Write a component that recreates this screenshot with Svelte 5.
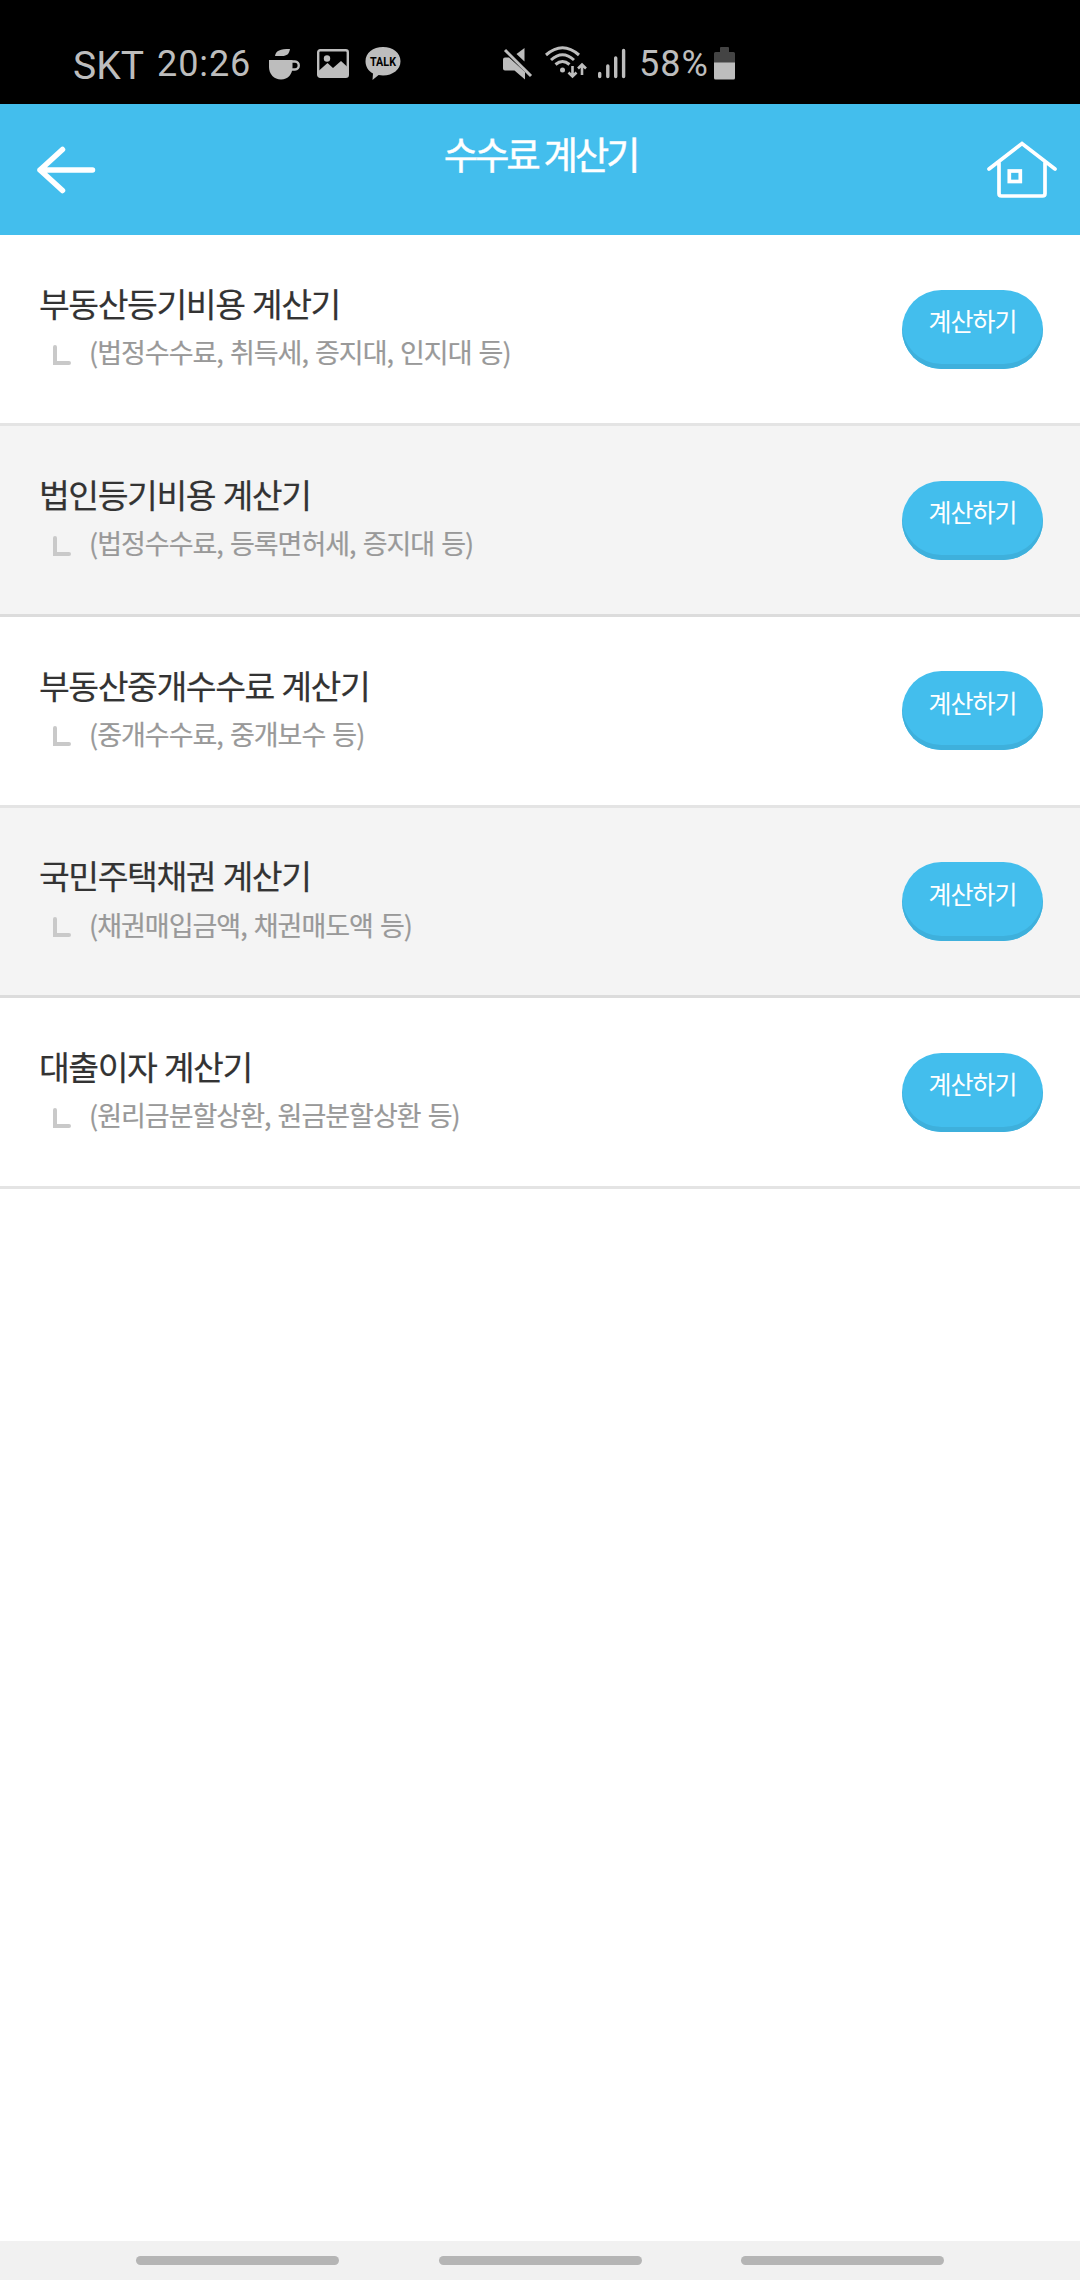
<script>
  const items = [
    { title: '부동산등기비용 계산기', detail: '(법정수수료, 취득세, 증지대, 인지대 등)' },
    { title: '법인등기비용 계산기', detail: '(법정수수료, 등록면허세, 증지대 등)' },
    { title: '부동산중개수수료 계산기', detail: '(중개수수료, 중개보수 등)' },
    { title: '국민주택채권 계산기', detail: '(채권매입금액, 채권매도액 등)' },
    { title: '대출이자 계산기', detail: '(원리금분할상환, 원금분할상환 등)' }
  ];
</script>

<div class="screen">
  <div class="status">
    <span class="carrier">SKT</span>
    <span class="clock">20:26</span>
    <svg class="cup" width="31" height="31" viewBox="0 0 31 31">
      <path d="M6 7C7 1.500 11 0 21 0C20 5 18 7 13 7Z" />
      <path d="M0 11H23.500V18C23.500 25 19 30.500 12 30.500C5 30.500 0 25 0 18Z" />
      <path class="line" d="M23 12.500H26C31 12.500 31 20.500 26 20.500H23" />
    </svg>
    <svg class="photo" width="32" height="29" viewBox="0 0 32 29">
      <rect class="line" x="1.200" y="1.200" width="29.600" height="26.600" rx="2" />
      <circle cx="10" cy="9.500" r="3.200" />
      <path d="M1.500 22L10.500 14L16 19L24 12L30.500 18V28H1.500Z" />
    </svg>
    <svg class="talk" width="36" height="34" viewBox="0 0 36 34">
      <path d="M18 0C28 0 35.500 6 35.500 14.200S28 28.400 18 28.400C16.500 28.400 15 28.300 13.600 28L7.500 33L8 26.500C3.300 24 .5 19.500 .5 14.200C.5 6 8 0 18 0Z" />
      <text x="18" y="19" text-anchor="middle" textLength="26" lengthAdjust="spacingAndGlyphs">TALK</text>
    </svg>
    <svg class="mute" width="30" height="32" viewBox="0 0 30 32">
      <path d="M21.500 0V13.500L13.500 6Z" />
      <path d="M2 9.500H6L22 24V31.500L11.500 22.500H2Q0 22.500 0 20.500V11.500Q0 9.500 2 9.500Z" />
      <path class="slash" d="M2 2L28 28" />
    </svg>
    <svg class="wifi" width="42" height="33" viewBox="0 0 42 33">
      <path class="arc" d="M1 9Q17.500 -5.500 34 9M6 14Q17.500 3.500 29 14M10.500 18.500Q17.500 12.500 24.500 18.500" />
      <circle cx="17.500" cy="24" r="2.500" />
      <path class="updown" d="M27.500 20V30M23.500 26.500L27.500 30.500L31.500 26.500M37 29V18.500M33 22.500L37 18.500L41 22.500" />
    </svg>
    <svg class="signal" width="28" height="31" viewBox="0 0 28 31">
      <path d="M1.700 25.500V28.500M9.800 18V28.500M17.700 10V28.500M25.600 2.500V28.500" />
    </svg>
    <span class="percent">58%</span>
    <svg class="battery" width="21" height="33" viewBox="0 0 21 33">
      <path class="empty" d="M6 1Q6 0 7 0H14Q15 0 15 1V5H19.500Q21 5 21 6.500V16H0V6.500Q0 5 1.500 5H6Z" />
      <path d="M0 15.500H21V31Q21 32.500 19.500 32.500H1.500Q0 32.500 0 31Z" />
    </svg>
  </div>

  <header>
    <svg class="back" width="60" height="48" viewBox="0 0 60 48">
      <path d="M26.500 3.500L4 24L26.500 44.500M4 24H56.500" />
    </svg>
    <h1>수수료 계산기</h1>
    <svg class="home" width="70" height="58" viewBox="0 0 70 58">
      <path d="M2 28L35 2.500L68 28M12 21.500V52.500Q12 55 14.500 55H55.500Q58 55 58 52.500V21.500" />
      <rect x="22.300" y="30" width="11" height="10.500" />
    </svg>
  </header>

  <ul>
    {#each items as item}
      <li>
        <div class="info">
          <h2>{item.title}</h2>
          <p>
            <svg width="18" height="20" viewBox="0 0 18 20"><path d="M2 2V18H16" /></svg>
            <span>{item.detail}</span>
          </p>
        </div>
        <button>계산하기</button>
      </li>
    {/each}
  </ul>

  <nav><i></i><i></i><i></i></nav>
</div>

<style>
  :global(body) { background: #fff; }
  .screen {
    width: 1080px;
    height: 2280px;
    display: flex;
    flex-direction: column;
    background: #fff;
    font-family: "Noto Sans CJK KR", sans-serif;
    overflow: hidden;
  }
  .status {
    box-sizing: border-box;
    height: 104px;
    flex: none;
    display: flex;
    align-items: flex-start;
    padding-left: 73px;
    background: #000;
    color: #bdbdbd;
    font-family: Roboto, sans-serif;
    white-space: nowrap;
  }
  .status span { flex: none; font-size: 36px; line-height: 42px; margin-top: 43px; }
  .status .carrier { width: 84px; font-size: 39px; line-height: 46px; }
  .status .clock { width: 112px; letter-spacing: .9px; }
  .status .percent { width: 74px; margin-left: 13px; letter-spacing: 1px; }
  .status svg { flex: none; fill: #bdbdbd; }
  .cup { margin-top: 49px; }
  .status .line { fill: none; stroke: #bdbdbd; stroke-width: 2.400; }
  .photo { margin: 49px 0 0 17px; }
  .talk { margin: 47px 0 0 16px; }
  .talk text { fill: #000; font: 700 12.500px Roboto, sans-serif; }
  .mute { margin: 48px 0 0 102px; }
  .slash { stroke: #bdbdbd; stroke-width: 3; }
  .wifi { margin: 46px 0 0 12px; }
  .arc { fill: none; stroke: #bdbdbd; stroke-width: 3; }
  .updown { fill: none; stroke: #bdbdbd; stroke-width: 2.600; }
  .signal { margin: 48px 0 0 11px; }
  .signal path { stroke: #bdbdbd; stroke-width: 3.400; stroke-linecap: round; }
  .battery { margin: 47px 0 0 1px; }
  .battery .empty { fill: #444; }

  header {
    box-sizing: border-box;
    height: 131.200px;
    flex: none;
    display: grid;
    grid-template-columns: 100px 1fr 100px;
    align-items: start;
    background: #43beed;
  }
  header svg { fill: none; stroke: #fff; }
  .back { margin: 42px 0 0 36px; stroke-width: 5.500; stroke-linecap: round; stroke-linejoin: round; }
  .home { margin: 37px 0 0 7px; stroke-width: 3.700; stroke-linecap: round; }
  h1 {
    margin: 21px 0 0 1px;
    color: #fff;
    text-align: center;
    font-size: 37.500px;
    font-weight: 400;
    line-height: 56px;
    letter-spacing: -3.300px;
    word-spacing: 1px;
    -webkit-text-stroke: .4px #fff;
  }

  ul { flex: 1; margin: 0; padding: 0; list-style: none; }
  li {
    box-sizing: border-box;
    height: 190.800px;
    display: flex;
    justify-content: space-between;
    padding: 0 37px 0 39px;
    border-bottom: 3px solid #e4e4e4;
  }
  li:nth-child(even) { background: #f4f4f4; border-bottom-color: #dcdcdc; }
  h2 {
    margin: 42.800px 0 0;
    color: #333;
    font-size: 33.500px;
    font-weight: 400;
    line-height: 50px;
    letter-spacing: -1.450px;
    word-spacing: 1.200px;
    -webkit-text-stroke: .2px #333;
  }
  p {
    display: flex;
    align-items: flex-start;
    margin: 1.300px 0 0;
    color: #999;
    font-size: 27px;
    line-height: 46px;
    letter-spacing: -1px;
    word-spacing: 2px;
    -webkit-text-stroke: .2px #999;
  }
  p svg { margin: 15.600px 18px 0 14px; fill: none; stroke: #c9c9c9; stroke-width: 4; stroke-linecap: round; }
  button {
    width: 141px;
    height: 79px;
    margin: 54.600px 0 0;
    padding: 0 0 18px;
    border: 0;
    border-radius: 40px;
    background: #43beed;
    box-shadow: inset 0 -5px #3eb0dc;
    color: #fff;
    font: 400 25px/36px "Noto Sans CJK KR", sans-serif;
    letter-spacing: -1px;
  }
  nav {
    height: 39px;
    flex: none;
    display: flex;
    justify-content: center;
    align-items: flex-start;
    gap: 99.500px;
    background: #f1f1f1;
  }
  nav i { width: 203px; height: 9px; margin-top: 15px; border-radius: 4.500px; background: #b5b5b5; }
</style>
